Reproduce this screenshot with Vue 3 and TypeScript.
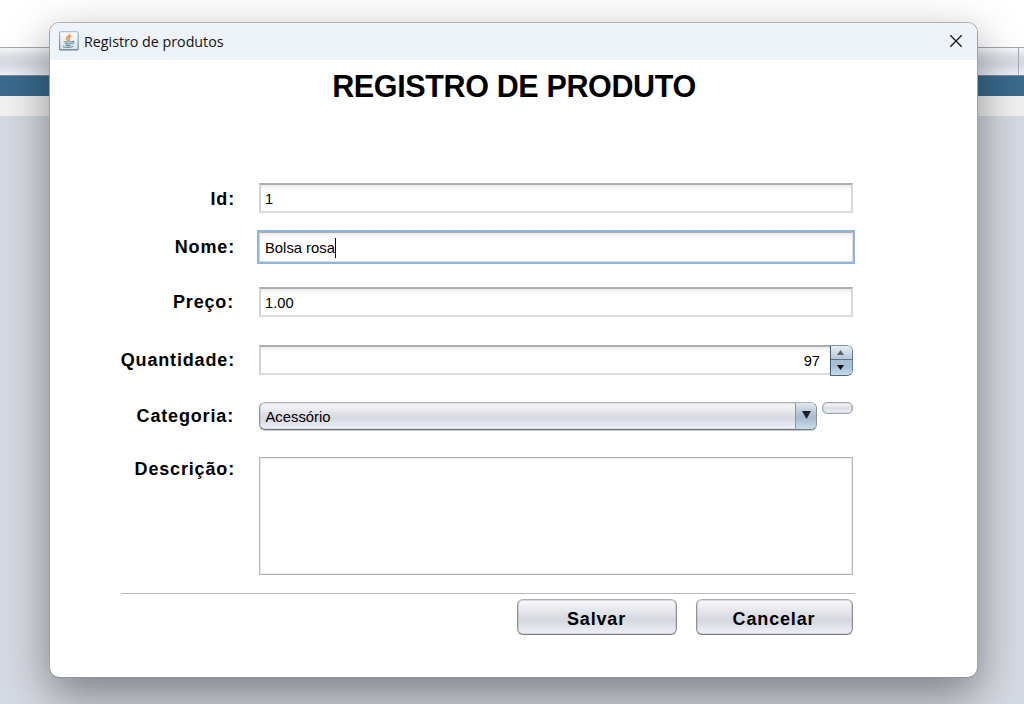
<script setup lang="ts">
import { ref } from 'vue'

const id = ref('1')
const nome = ref('Bolsa rosa')
const preco = ref('1.00')
const quantidade = ref(97)
const categoria = ref('Acessório')
</script>

<template>
  <div class="desktop">
    <div class="backdrop">
      <div class="band top"></div>
      <div class="band toolbar"><i></i></div>
      <div class="band blue"></div>
      <div class="band light"></div>
      <div class="band body"></div>
    </div>

    <section class="dialog">
      <header class="titlebar">
        <svg class="java" width="20" height="20" viewBox="0 0 20 20">
          <defs>
            <linearGradient id="tile" x1="0" y1="0" x2="0" y2="1">
              <stop offset="0" stop-color="#fdfdfd" />
              <stop offset="1" stop-color="#dde1e5" />
            </linearGradient>
            <linearGradient id="rim" x1="0" y1="0" x2="0" y2="1">
              <stop offset="0" stop-color="#9db4c7" />
              <stop offset="1" stop-color="#587894" />
            </linearGradient>
          </defs>
          <rect x="0.6" y="0.7" width="18.6" height="18.2" rx="1.2" fill="url(#tile)" stroke="url(#rim)" stroke-width="1.1" />
          <path d="M10.7 2.8C11.2 5 7 5.8 7.6 7.8c.2.9 1.2 1.4 1.5 2.2M12.3 5.2C9.5 6.2 9.2 7 10.2 8.1c.5.7.1 1.3-.5 1.9" fill="none" stroke="#ee9550" stroke-width="1.5" />
          <path d="M5.4 10.3c-1.3.8 7 .9 8.1.1M6 12.2c1.5.8 5 .7 6.6.1M6.6 14c1.4.8 3.9.6 5.2 0M13.3 10.3c2.6-.4 1.8 2-.5 2.6M4.6 15c-2.1 1.7 7.7 1.7 9.6.3" fill="none" stroke="#6790ad" stroke-width="1.15" />
        </svg>
        <span class="caption">Registro de produtos</span>
        <svg class="close" width="14" height="14" viewBox="0 0 14 14">
          <path d="M1.3 1.3 12.7 12.7M12.7 1.3 1.3 12.7" stroke="#161616" stroke-width="1.3" fill="none" />
        </svg>
      </header>

      <h1>REGISTRO DE PRODUTO</h1>

      <div class="form">
        <label class="lbl low">Id:</label>
        <div class="field">{{ id }}</div>

        <label class="lbl low">Nome:</label>
        <div class="field focus">{{ nome }}<span class="caret"></span></div>

        <label class="lbl inset">Preço:</label>
        <div class="field">{{ preco }}</div>

        <label class="lbl">Quantidade:</label>
        <div class="spinner">
          <div class="field num">{{ quantidade }}</div>
          <div class="steps">
            <div class="step up"><svg width="7" height="5" viewBox="0 0 7 5"><path d="M0 5 3.5 0 7 5z" fill="#646464" /></svg></div>
            <div class="step down"><svg width="7" height="5" viewBox="0 0 7 5"><path d="M0 0h7L3.5 5z" fill="#0b0e12" /></svg></div>
          </div>
        </div>

        <label class="lbl inset cat">Categoria:</label>
        <div class="catline">
          <div class="combo">
            <span>{{ categoria }}</span>
            <div class="arrow"><svg width="9" height="8" viewBox="0 0 9 8"><path d="M0 0h9L4.5 8z" fill="#1c2126" /></svg></div>
          </div>
          <div class="mini"></div>
        </div>

        <label class="lbl desc">Descrição:</label>
        <div class="area"></div>
      </div>

      <div class="rule"></div>
      <footer class="actions">
        <div class="btn save">Salvar</div>
        <div class="btn cancel">Cancelar</div>
      </footer>
    </section>
  </div>
</template>

<style>
body {
  margin: 0;
  overflow: hidden;
}
</style>

<style scoped>
.desktop {
  display: grid;
  width: 1024px;
  height: 704px;
  overflow: hidden;
  font-family: "Liberation Sans", Arial, sans-serif;
  color: #000;
}
.backdrop,
.dialog {
  grid-area: 1 / 1;
}
.backdrop {
  display: flex;
  flex-direction: column;
}
.top {
  height: 47px;
  background: #fff;
}
.toolbar {
  box-sizing: border-box;
  height: 29px;
  border-top: 1px solid #a3a5ae;
  border-bottom: 1px solid #85878b;
  background: linear-gradient(#f6f7fa 0, #dcdee5 35%, #d8dae2 58%, #eceff9 100%);
  display: flex;
  justify-content: flex-end;
}
.toolbar i {
  width: 5px;
  border-left: 1px solid #a5aab4;
}
.blue {
  height: 20px;
  background: #396a8d;
}
.light {
  height: 20px;
  background: #f1f1f1;
}
.body {
  flex: 1;
  background: #d5d9e1;
}
.dialog {
  box-sizing: border-box;
  width: 929px;
  height: 656px;
  margin: 22px 0 0 49px;
  border: 1px solid;
  border-color: #afb1b3 #a0a1a4 #909195 #a0a1a4;
  border-radius: 10px;
  background: #fff;
  background-clip: padding-box;
  box-shadow: 0 17px 46px rgba(0, 0, 0, 0.42);
  display: flex;
  flex-direction: column;
}
.titlebar {
  box-sizing: border-box;
  height: 37px;
  flex: none;
  display: flex;
  align-items: center;
  padding: 0 14px 2px 9px;
  background: #eef3f9;
  border-radius: 9px 9px 0 0;
}
.java {
  margin-top: 1px;
}
.caption {
  flex: 1;
  margin: 2px 0 0 5px;
  font: 14.25px/20px "Open Sans", "Noto Sans", sans-serif;
  color: #111;
}
h1 {
  margin: 8px 0 0 1px;
  font-size: 30.5px;
  line-height: 36px;
  letter-spacing: -0.36px;
  font-weight: bold;
  text-align: center;
}
.form {
  display: grid;
  grid-template-columns: 186px 594px;
  grid-template-rows: 48px 56px 58px 57px 55px 118px;
  column-gap: 23px;
  margin-top: 79px;
}
.lbl {
  padding-right: 1px;
  font-size: 18px;
  line-height: 30px;
  font-weight: bold;
  letter-spacing: 0.84px;
  text-align: right;
}
.low {
  line-height: 32px;
}
.inset {
  padding-right: 2px;
}
.cat {
  line-height: 28px;
}
.desc {
  line-height: 24px;
}
.field {
  box-sizing: border-box;
  height: 30px;
  padding: 0 0 0 4px;
  border: 2px solid;
  border-color: #adadad #dadada #dcdcdc #d3d3d3;
  background: linear-gradient(#ebebeb, #f9f9f9 3px, #fff 6px);
  font-size: 14.7px;
  line-height: 29px;
}
.focus {
  display: flex;
  align-items: center;
  margin-top: 1px;
  padding: 2px 0 0 5px;
  border-width: 1px;
  box-shadow: 0 0 0 2px #8fb5d9;
  font-size: 14.8px;
}
.caret {
  width: 1px;
  height: 20px;
  background: #000;
}
.spinner {
  display: flex;
}
.num {
  flex: 1;
  text-align: right;
  padding-right: 10px;
  border-right: 0;
}
.steps {
  box-sizing: border-box;
  width: 23px;
  height: 31px;
  border: 1px solid;
  border-color: #8594a3 #6c7f91 #50657a #3f5a72;
  border-radius: 0 6px 6px 0;
  overflow: hidden;
}
.step {
  box-sizing: border-box;
  display: flex;
  align-items: center;
  justify-content: center;
  padding-right: 2px;
}
.up {
  height: 14px;
  border-bottom: 1px solid #5a7389;
  background: linear-gradient(#e6edf3, #b7c8d7);
}
.down {
  height: 15px;
  background: linear-gradient(#a9bfd4, #a5bed4 40%, #c7dced);
}
.catline {
  display: flex;
  gap: 5px;
}
.combo {
  box-sizing: border-box;
  width: 558px;
  height: 28px;
  border: 1px solid;
  border-color: #b0b3b9 #8d9098 #74777e #8d9098;
  border-radius: 6px;
  background: linear-gradient(#f9f9fb, #dedfe5 45%, #d5d8e0 58%, #eff1fa);
  box-shadow: 0 1px 0 #c6c8cd, inset 0 0 0 1px #80838a33;
  display: flex;
  justify-content: space-between;
  overflow: hidden;
  font-size: 14.8px;
  line-height: 29px;
  padding-left: 5.5px;
}
.arrow {
  box-sizing: border-box;
  width: 21px;
  border-left: 1px solid #8599ad;
  background: linear-gradient(#e0e9f0, #afc1d3 45%, #a7bdd1 58%, #c8dced);
  display: flex;
  justify-content: center;
  align-items: center;
  padding-bottom: 2px;
}
.mini {
  box-sizing: border-box;
  width: 31px;
  height: 12px;
  margin-top: -0.5px;
  border: 1px solid #a0a3ab;
  border-radius: 5px;
  background: linear-gradient(#f9f9fb, #dcdee5 52%, #f0f2fa);
  box-shadow: inset 0 0 0 1px #80838a33;
}
.area {
  box-sizing: border-box;
  border: 1px solid #b0b3ba;
  box-shadow: inset 0 0 0 1px #e9eaec;
}
.rule {
  height: 1px;
  width: 734px;
  margin: 18px 0 5px 71px;
  background: #bcbcbf;
}
.actions {
  display: flex;
  gap: 19px;
  margin-left: 467px;
}
.btn {
  box-sizing: border-box;
  height: 36px;
  border: 1px solid;
  border-color: #adb0b6 #8f9299 #777a81 #8f9299;
  border-radius: 6px;
  background: linear-gradient(#f9f9fb, #dedfe4 45%, #d5d8de 60%, #eef0f8);
  box-shadow: inset 0 0 0 1px #80838a40;
  font-size: 18px;
  line-height: 38px;
  font-weight: bold;
  letter-spacing: 0.84px;
  text-align: center;
  padding-right: 1px;
}
.save {
  width: 160px;
}
.cancel {
  width: 157px;
}
</style>
